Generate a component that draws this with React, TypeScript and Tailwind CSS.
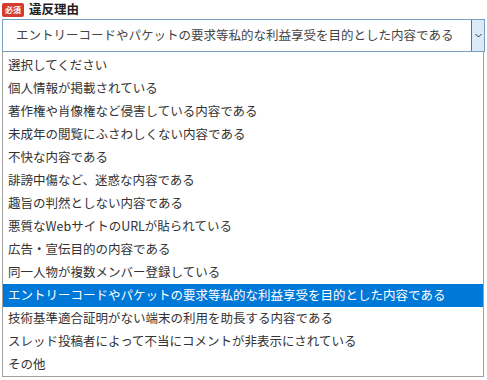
const options = [
  "選択してください",
  "個人情報が掲載されている",
  "著作権や肖像権など侵害している内容である",
  "未成年の閲覧にふさわしくない内容である",
  "不快な内容である",
  "誹謗中傷など、迷惑な内容である",
  "趣旨の判然としない内容である",
  "悪質なWebサイトのURLが貼られている",
  "広告・宣伝目的の内容である",
  "同一人物が複数メンバー登録している",
  "エントリーコードやパケットの要求等私的な利益享受を目的とした内容である",
  "技術基準適合証明がない端末の利用を助長する内容である",
  "スレッド投稿者によって不当にコメントが非表示にされている",
  "その他",
];

const selected = 10;

export default function App() {
  return (
    <div className="w-[487px] h-[380px] bg-white overflow-hidden font-['Noto_Sans_CJK_JP',sans-serif] text-[#333]">
      <div className="flex items-center gap-[5px] pl-[2px] pt-[2px] h-[17px]">
        <span className="flex items-center justify-center w-[22px] h-[14px] rounded-[2px] bg-[#d23b30] text-white text-[8px] font-bold leading-none">
          必須
        </span>
        <span className="text-[12.5px] font-bold leading-none text-[#222]">違反理由</span>
      </div>
      <div className="ml-[2px] mt-[2px] w-[483px] h-[33px] border border-[#7a9ec2] flex items-stretch">
        <div className="flex-1 flex items-center pl-[13px] text-[12.5px] text-[#444] whitespace-nowrap">
          {options[selected]}
        </div>
        <div className="w-[13px] m-[0px] border-l border-[#3d7bad] bg-[#dbeaf7] flex items-center justify-center">
          <svg width="7" height="5" viewBox="0 0 7 5">
            <path d="M0.5 1 L3.5 4 L6.5 1" fill="none" stroke="#333" strokeWidth="1" />
          </svg>
        </div>
      </div>
      <ul className="ml-[2px] w-[482px] border border-[#a0a0a0] border-t-0 pt-[2px]">
        {options.map((opt, i) => (
          <li
            key={i}
            className={`h-[23px] flex items-center pl-[5px] text-[12.5px] whitespace-nowrap ${
              i === selected ? "bg-[#0078d7] text-white" : "text-[#333]"
            }`}
          >
            {opt}
          </li>
        ))}
      </ul>
    </div>
  );
}
